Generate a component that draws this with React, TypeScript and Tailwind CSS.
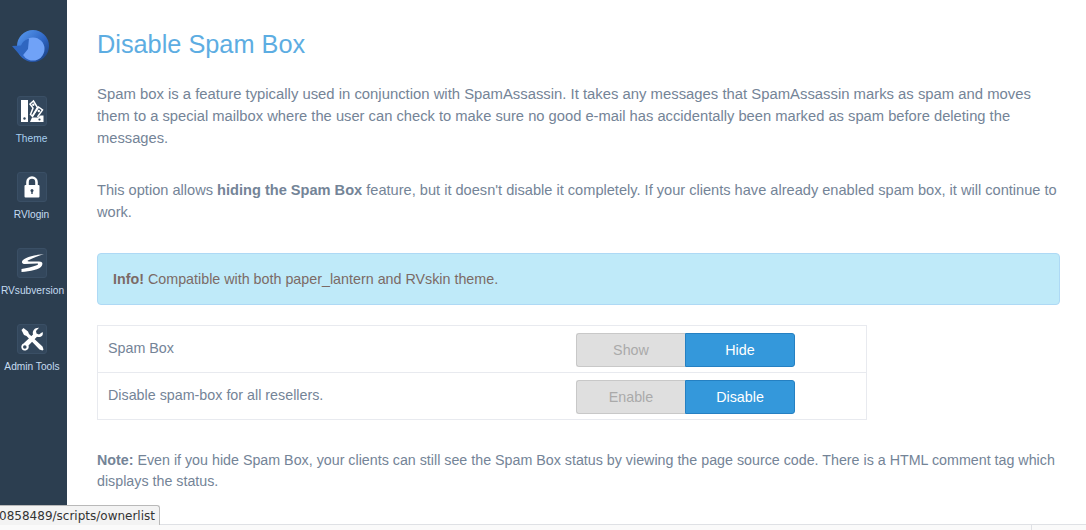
const DARK = "#33475c";

const ThemeIcon = () => (
  <svg width="30" height="30" viewBox="0 0 30 30" fill="none">
    <rect x="4" y="4" width="7" height="22" fill="#fff" />
    <circle cx="7.500" cy="22.500" r="1.200" fill={DARK} />
    <path d="M13 8 16.500 5 20.500 11.500 15.500 20 13.500 18.500 16 12z" fill="none" stroke="#fff" strokeWidth="1.500" />
    <circle cx="16.300" cy="8.700" r="1.200" fill="#fff" />
    <path d="M15 21 21.500 11 25.500 14 20.500 21" fill="none" stroke="#fff" strokeWidth="1.500" />
    <circle cx="21.800" cy="15" r="1.200" fill="#fff" />
    <path d="M13 26 15 21.500H21L23.500 19.500H26.500V26z" fill="#fff" />
    <circle cx="22.500" cy="23.500" r="1.100" fill={DARK} />
  </svg>
);
const LockIcon = () => (
  <svg width="30" height="30" viewBox="0 0 30 30" fill="none">
    <path d="M10.500 14V10a4.500 4.500 0 0 1 9 0V14" stroke="#fff" strokeWidth="2.600" />
    <rect x="7.500" y="13" width="15" height="12.500" rx="1" fill="#fff" />
    <circle cx="15" cy="18.500" r="1.500" fill={DARK} />
    <rect x="14.300" y="18.500" width="1.400" height="3.500" fill={DARK} />
  </svg>
);
const SwooshIcon = () => (
  <svg width="30" height="30" viewBox="0 0 30 30" fill="none">
    <path
      d="M27 6C18 7 9 9 6 12C4 14 5 16 8 16L20 15.500C22 15.500 21 17 19 17.500C15 19 10 20 4.500 21L4.500 24C13 23.500 23 21.500 25 17.500C26.500 14 24 13.500 21 13.500L12 13.500C10 13.500 10 12.500 12 12C16 10 21 8 27 6Z"
      fill="#fff"
    />
  </svg>
);
const ToolsIcon = () => (
  <svg width="30" height="30" viewBox="0 0 30 30" fill="none">
    <path d="M4.500 6 6.500 4 11 7.500 12 10 25.500 22.500 26.500 25.500 25.500 26.500 22.500 25.500 9.500 12 7 11z" fill="#fff" />
    <path d="M25.500 8 22 10.500 19.500 9.500 19 7 22 3.800C18 3.500 15 6.500 16 10.500L6.500 19.500C3.500 20.500 3.500 25.500 7 26.500 10.500 27 12.500 24 11.500 21.500L20 12.800C23.500 14 27 11.500 25.500 8Z" fill="#fff" />
    <circle cx="7.800" cy="23" r="1.800" fill={DARK} />
  </svg>
);

const Logo = () => (
  <svg width="38" height="32" viewBox="12 30 38 32" fill="none">
    <defs>
      <linearGradient id="a" x1="0" y1="0" x2="1" y2="1">
        <stop offset="0" stopColor="#5b9df2" />
        <stop offset="0.550" stopColor="#2f66c4" />
        <stop offset="1" stopColor="#173a78" />
      </linearGradient>
    </defs>
    <circle cx="33" cy="46" r="16" fill="url(#a)" />
    <circle cx="33" cy="49" r="11.500" fill="#70a2f7" />
    <path d="M12 46 21 45.500C22.500 42 25 39.500 29 38.500L28 49 21.500 57z" fill="#2f66c0" />
  </svg>
);

const items = [
  { label: "Theme", icon: <ThemeIcon />, cls: "mr-[4px] text-[#a8d0f0]" },
  { label: "RVlogin", icon: <LockIcon />, cls: "mr-[4px] text-[#c5dcf0]" },
  { label: "RVsubversion", icon: <SwooshIcon />, cls: "mr-[2px] text-[#c5dcf0]" },
  { label: "Admin Tools", icon: <ToolsIcon />, cls: "mr-[3px] text-[#c5dcf0]" },
];

function Toggle({ off, on }: { off: string; on: string }) {
  return (
    <div className="mt-[7px] flex h-[34px] w-[219px] self-start text-[14.300px]">
      <div className="flex w-[109px] items-center justify-center rounded-l-[3px] border border-r-0 border-[#c8c8c8] bg-[#dfdfdf] pt-[1px] text-[#aaaaaa]">{off}</div>
      <div className="flex w-[110px] items-center justify-center rounded-r-[3px] border border-[#2580c2] bg-[#3498db] pt-[1px] text-white">{on}</div>
    </div>
  );
}

function Row({ label, off, on, last }: { label: string; off: string; on: string; last?: boolean }) {
  return (
    <div className={`flex items-center pl-[10px] ${last ? "h-[46px]" : "h-[47px] border-b border-[#e8eaef]"}`}>
      <div className="-mt-[1px] w-[468px] text-[14.300px] text-[#748497]">{label}</div>
      <Toggle off={off} on={on} />
    </div>
  );
}

export default function App() {
  return (
    <div className="relative flex h-[530px] w-[1086px] flex-col overflow-hidden bg-white font-['Liberation_Sans',Arial,sans-serif]">
      <div className="flex min-h-0 flex-1">
        <aside className="flex w-[67px] shrink-0 flex-col items-center bg-[#2c3e50]">
          <div className="mt-[30px] mr-[5px] mb-[34px] h-[32px]"><Logo /></div>
          <div className="flex flex-col items-center gap-[27px]">
            {items.map((it) => (
              <div key={it.label} className="flex h-[49px] w-[67px] flex-col items-center">
                <div className="mr-[4px] flex h-[30px] w-[30px] items-center justify-center rounded-[3px] border border-[#3a4f65] bg-[#33475c]">
                  <div className="h-[30px] w-[30px] shrink-0">{it.icon}</div>
                </div>
                <div className={`mt-[7px] whitespace-nowrap text-[10.200px] leading-[12px] ${it.cls}`}>{it.label}</div>
              </div>
            ))}
          </div>
        </aside>
        <main className="min-w-0 flex-1 pr-[26px] pl-[30px] text-[14.850px] leading-[22.300px] text-[#748497]">
          <h1 className="mt-[29px] text-[25.300px] leading-[30px] text-[#5dade2]">Disable Spam Box</h1>
          <p className="mt-[24px] leading-[22.200px]">
            Spam box is a feature typically used in conjunction with SpamAssassin. It takes any messages that SpamAssassin marks as spam and moves<br />
            <span className="text-[14.720px]">them to a special mailbox where the user can check to make sure no good e-mail has accidentally been marked as spam before deleting the messages.</span>
          </p>
          <p className="mt-[29px] text-[14.600px] leading-[22px]">This option allows <b>hiding the Spam Box</b> feature, but it doesn't disable it completely. If your clients have already enabled spam box, it will continue to work.</p>
          <div className="mt-[30.400px] flex h-[52px] items-center rounded-[4px] border border-[#aed9f5] bg-[#bfeaf9] pt-[1px] pl-[15px] text-[14.300px] text-[#7b6a66]">
            <span><b>Info!</b> Compatible with both paper_lantern and RVskin theme.</span>
          </div>
          <div className="mt-[20px] w-[770px] border border-[#e8eaef]">
            <Row label="Spam Box" off="Show" on="Hide" />
            <Row label="Disable spam-box for all resellers." off="Enable" on="Disable" last />
          </div>
          <p className="mt-[30px] text-[14.280px] leading-[21px]"><b>Note:</b> Even if you hide Spam Box, your clients can still see the Spam Box status by viewing the page source code. There is a HTML comment tag which displays the status.</p>
        </main>
      </div>
      <footer className="flex h-[6px] shrink-0 justify-end border-t border-[#dfe1e5] bg-[#fafafa]">
        <div className="w-[55px] border-l border-[#dfe1e5]" />
      </footer>
      <div className="absolute bottom-[5px] left-0 flex h-[20px] w-[160px] items-center justify-end overflow-hidden rounded-tr-[3px] border-t border-r border-[#b9b9b9] bg-[#f3f3f3] pr-[4px] font-['DejaVu_Sans',sans-serif] text-[12px] text-[#333333]">
        <span className="whitespace-nowrap">90858489/scripts/ownerlist</span>
      </div>
    </div>
  );
}
